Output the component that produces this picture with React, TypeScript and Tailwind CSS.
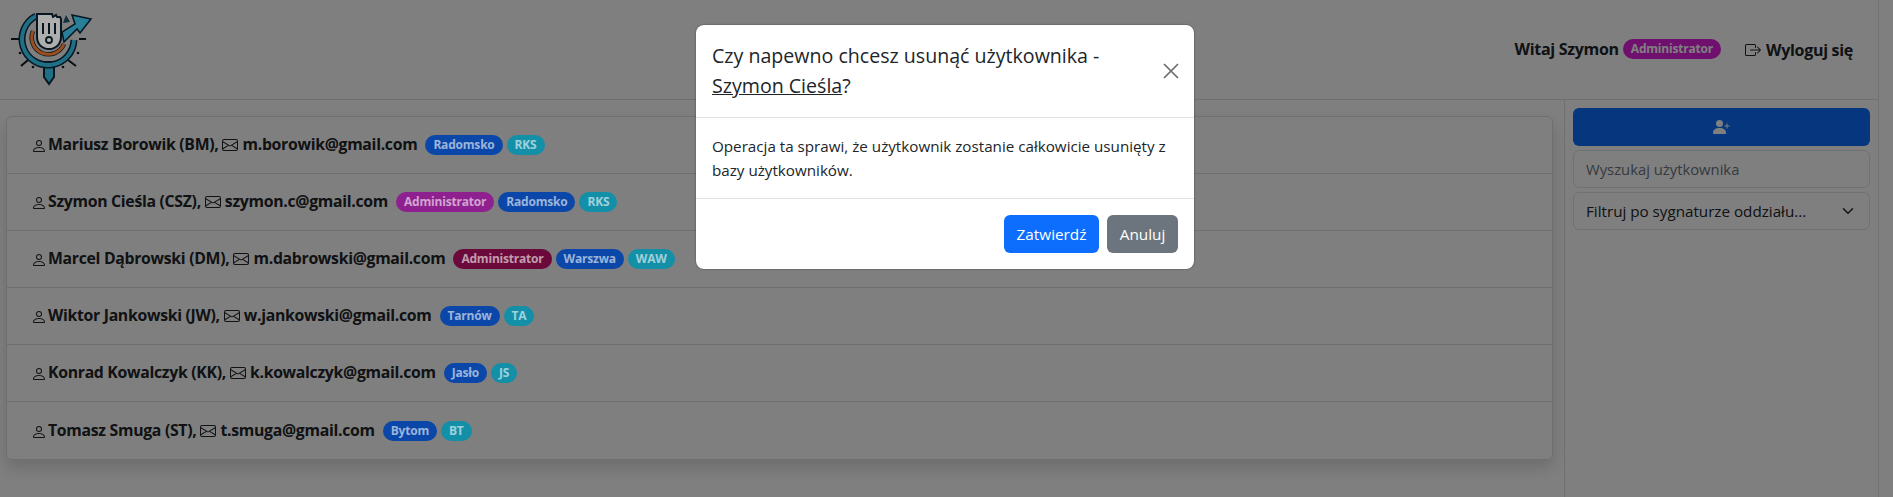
import { ChevronDown } from "lucide-react";

const FONT = "font-['Open_Sans','Noto_Sans',sans-serif]";

interface UserRow {
  name: string;
  email: string;
  badges: { label: string; color: string }[];
}

const PRIMARY = "bg-[#0d6efd]";
const BLUE = "bg-[#0a47a8]";
const TEAL = "bg-[#138fa8]";

const users: UserRow[] = [
  {
    name: "Mariusz Borowik (BM),",
    email: "m.borowik@gmail.com",
    badges: [
      { label: "Radomsko", color: BLUE },
      { label: "RKS", color: TEAL },
    ],
  },
  {
    name: "Szymon Cieśla (CSZ),",
    email: "szymon.c@gmail.com",
    badges: [
      { label: "Administrator", color: "bg-[#8f208f]" },
      { label: "Radomsko", color: BLUE },
      { label: "RKS", color: TEAL },
    ],
  },
  {
    name: "Marcel Dąbrowski (DM),",
    email: "m.dabrowski@gmail.com",
    badges: [
      { label: "Administrator", color: "bg-[#6b0a3a]" },
      { label: "Warszwa", color: BLUE },
      { label: "WAW", color: TEAL },
    ],
  },
  {
    name: "Wiktor Jankowski (JW),",
    email: "w.jankowski@gmail.com",
    badges: [
      { label: "Tarnów", color: BLUE },
      { label: "TA", color: TEAL },
    ],
  },
  {
    name: "Konrad Kowalczyk (KK),",
    email: "k.kowalczyk@gmail.com",
    badges: [
      { label: "Jasło", color: BLUE },
      { label: "JS", color: TEAL },
    ],
  },
  {
    name: "Tomasz Smuga (ST),",
    email: "t.smuga@gmail.com",
    badges: [
      { label: "Bytom", color: BLUE },
      { label: "BT", color: TEAL },
    ],
  },
];

const PersonIcon = () => (
  <svg width="16" height="16" viewBox="0 0 16 16" fill="currentColor" className="shrink-0">
    <path d="M8 8a3 3 0 1 0 0-6 3 3 0 0 0 0 6Zm2-3a2 2 0 1 1-4 0 2 2 0 0 1 4 0Zm4 8c0 1-1 1-1 1H3s-1 0-1-1 1-4 6-4 6 3 6 4Zm-1-.004c-.001-.246-.154-.986-.832-1.664C11.516 10.68 10.289 10 8 10c-2.29 0-3.516.68-4.168 1.332-.678.678-.83 1.418-.832 1.664h10Z" />
  </svg>
);

const MailIcon = () => (
  <svg width="16" height="16" viewBox="0 0 16 16" fill="currentColor" className="shrink-0">
    <path d="M0 4a2 2 0 0 1 2-2h12a2 2 0 0 1 2 2v8a2 2 0 0 1-2 2H2a2 2 0 0 1-2-2V4Zm2-1a1 1 0 0 0-1 1v.217l7 4.2 7-4.2V4a1 1 0 0 0-1-1H2Zm13 2.383-4.708 2.825L15 11.105V5.383Zm-.034 6.876-5.64-3.471L8 9.583l-1.326-.795-5.64 3.47A1 1 0 0 0 2 13h12a1 1 0 0 0 .966-.741ZM1 11.105l4.708-2.897L1 5.383v5.722Z" />
  </svg>
);

const Logo = () => (
  <svg width="100" height="90" viewBox="0 0 100 90" fill="none" className="block">
    <path d="M11 39h8M79 39h7" stroke="#060f14" strokeWidth="2" />
    <path d="M28 60l-7 6M68 60l8 6" stroke="#060f14" strokeWidth="2" />
    <circle cx="20" cy="53" r="1.300" fill="#060f14" />
    <circle cx="33" cy="67" r="1.300" fill="#060f14" />
    <circle cx="63" cy="67" r="1.300" fill="#060f14" />
    <circle cx="78" cy="53" r="1.300" fill="#060f14" />
    <path d="M44 62h10v15l-5 7-5-7Z" fill="#1f7086" stroke="#061722" strokeWidth="2" />
    <path d="M36 16A26 26 0 1 0 74 40" stroke="#061722" strokeWidth="7" />
    <path d="M36 16A26 26 0 1 0 74 40" stroke="#1f7086" strokeWidth="4" />
    <path d="M33 31a16 16 0 1 0 31 13" stroke="#0a1418" strokeWidth="4.500" />
    <path d="M33 31a16 16 0 1 0 31 13" stroke="#9c4e20" strokeWidth="3" />
    <path d="M37 14h15l1 3 3-2 1 2h3l1 2v18c0 7-5 12-12 12s-12-5-12-12Z" fill="#aeaeae" stroke="#061722" strokeWidth="2" />
    <path d="M43 23v11M49 23v11M55 23v11" stroke="#061722" strokeWidth="2" />
    <circle cx="49" cy="40" r="3" fill="#aeaeae" stroke="#061722" strokeWidth="1.800" />
    <path d="M63 23l3-8 4 7Z" fill="#12303d" />
    <path d="M91 19L72 15l3 9-13 8 2 10 13-13 3 4Z" fill="#2a7f98" stroke="#061722" strokeWidth="1.500" />
  </svg>
);

const Badge = ({ label, color }: { label: string; color: string }) => (
  <span className={`relative z-10 inline-block rounded-full px-[8px] py-[3px] text-[12px] leading-[14px] font-bold tracking-[-0.2px] text-white/60 ${color}`}>
    {label}
  </span>
);

const UserItem = ({ user, last }: { user: UserRow; last: boolean }) => (
  <li className={`flex h-[57px] items-center pl-[24px] text-[#212529] ${last ? "" : "border-b border-[#dfdfdf]"}`}>
    <div className="flex items-center text-[15.8px] font-bold tracking-[-0.3px]">
      <span className="mt-[2px] mr-[1px]"><PersonIcon /></span>
      <span>{user.name}</span>
      <span className="mx-[4px]"><MailIcon /></span>
      <span>{user.email}</span>
    </div>
    <div className="ml-[8px] flex items-center gap-[4px]">
      {user.badges.map((b) => (
        <Badge key={b.label} label={b.label} color={b.color} />
      ))}
    </div>
  </li>
);

export default function App() {
  return (
    <div className={`relative h-[497px] overflow-hidden bg-white ${FONT}`}>
      <div className="flex h-full w-[1879px] flex-col border-r border-[#e6e6e6]">
        <header className="flex h-[100px] shrink-0 items-start justify-between border-b border-[#dfdfdf]">
          <div className="relative z-10">
            <Logo />
          </div>
          <div className="flex items-center pt-[35px] pr-[25px] text-[#212529]">
            <span className="text-[16px] font-bold tracking-[-0.3px]">Witaj Szymon</span>
            <span className="ml-[4px] rounded-full bg-[#de20de] px-[8px] py-[3px] text-[12px] leading-[14px] font-bold tracking-[-0.2px] text-white">
              Administrator
            </span>
            <span className="mt-[3px] ml-[24px] flex items-center gap-[5px] text-[16px] font-bold tracking-[-0.3px]">
              <svg width="16" height="16" viewBox="0 0 16 16" fill="currentColor">
                <path d="M10 12.500a.5.5 0 0 1-.5.5h-8a.5.5 0 0 1-.5-.5v-9a.5.5 0 0 1 .5-.5h8a.5.5 0 0 1 .5.5v2a.5.5 0 0 0 1 0v-2A1.500 1.500 0 0 0 9.500 2h-8A1.500 1.500 0 0 0 0 3.500v9A1.500 1.500 0 0 0 1.500 14h8a1.500 1.500 0 0 0 1.500-1.500v-2a.5.5 0 0 0-1 0v2Z" />
                <path d="M15.854 8.354a.5.5 0 0 0 0-.708l-3-3a.5.5 0 0 0-.708.708L14.293 7.500H5.500a.5.5 0 0 0 0 1h8.793l-2.147 2.146a.5.5 0 0 0 .708.708l3-3Z" />
              </svg>
              Wyloguj się
            </span>
          </div>
        </header>
        <div className="flex min-h-0 flex-1">
          <main className="flex-1 pt-[16px] pr-[11px] pl-[6px]">
            <ul className="rounded-[6px] border border-[#dfdfdf] shadow-[0_8px_16px_rgba(0,0,0,0.15)]">
              {users.map((u, i) => (
                <UserItem key={u.email} user={u} last={i === users.length - 1} />
              ))}
            </ul>
          </main>
          <aside className="flex w-[314px] shrink-0 flex-col gap-[4px] border-l border-[#dfdfdf] px-[8px] pt-[8px]">
            <button className={`flex h-[38px] items-center justify-center rounded-[6px] ${PRIMARY} text-white`}>
              <svg width="17" height="14" viewBox="0 0 17 14" fill="currentColor">
                <circle cx="6.500" cy="3.500" r="3.500" />
                <path d="M0 13c0-3.500 2.500-5 6.500-5s6.500 1.500 6.500 5c0 .6-.4 1-1 1H1c-.6 0-1-.4-1-1Z" />
                <path d="M13.500 3.500h1v2h2v1h-2v2h-1v-2h-2v-1h2Z" />
              </svg>
            </button>
            <div className="flex h-[38px] items-center rounded-[6px] border border-[#dee2e6] px-[12px] text-[14.8px] text-[#6c757d]">
              Wyszukaj użytkownika
            </div>
            <div className="flex h-[38px] items-center justify-between rounded-[6px] border border-[#dee2e6] px-[12px] text-[15.2px] text-[#212529]">
              <span>Filtruj po sygnaturze oddziału...</span>
              <ChevronDown size={18} strokeWidth={2} />
            </div>
          </aside>
        </div>
      </div>

      {/* backdrop + modal */}
      <div className="absolute inset-0 bg-black/50" />
      <div className="absolute top-[25px] left-[696px] z-20 w-[498px] rounded-[8px] bg-white text-[#212529] shadow-[0_0_2px_rgba(0,0,0,0.5)]">
        <div className="flex items-center justify-between border-b border-[#dee2e6] py-[16px] pr-[15px] pl-[16px]">
          <h5 className="w-[430px] text-[19.6px] leading-[30px] font-normal">
            Czy napewno chcesz usunąć użytkownika - <u>Szymon Cieśla</u>?
          </h5>
          <svg width="16" height="16" viewBox="0 0 16 16" stroke="#6d6d6d" strokeWidth="1.700" className="shrink-0">
            <path d="M1 1l14 14M15 1L1 15" />
          </svg>
        </div>
        <div className="border-b border-[#dee2e6] p-[16px] text-[15.2px] leading-[24px]">
          Operacja ta sprawi, że użytkownik zostanie całkowicie usunięty z bazy użytkowników.
        </div>
        <div className="flex justify-end gap-[8px] p-[16px]">
          <button className={`h-[38px] w-[95px] rounded-[6px] ${PRIMARY} text-[15.3px] text-white`}>Zatwierdź</button>
          <button className="h-[38px] w-[71px] rounded-[6px] bg-[#6c757d] text-[15.3px] text-white">Anuluj</button>
        </div>
      </div>
    </div>
  );
}
